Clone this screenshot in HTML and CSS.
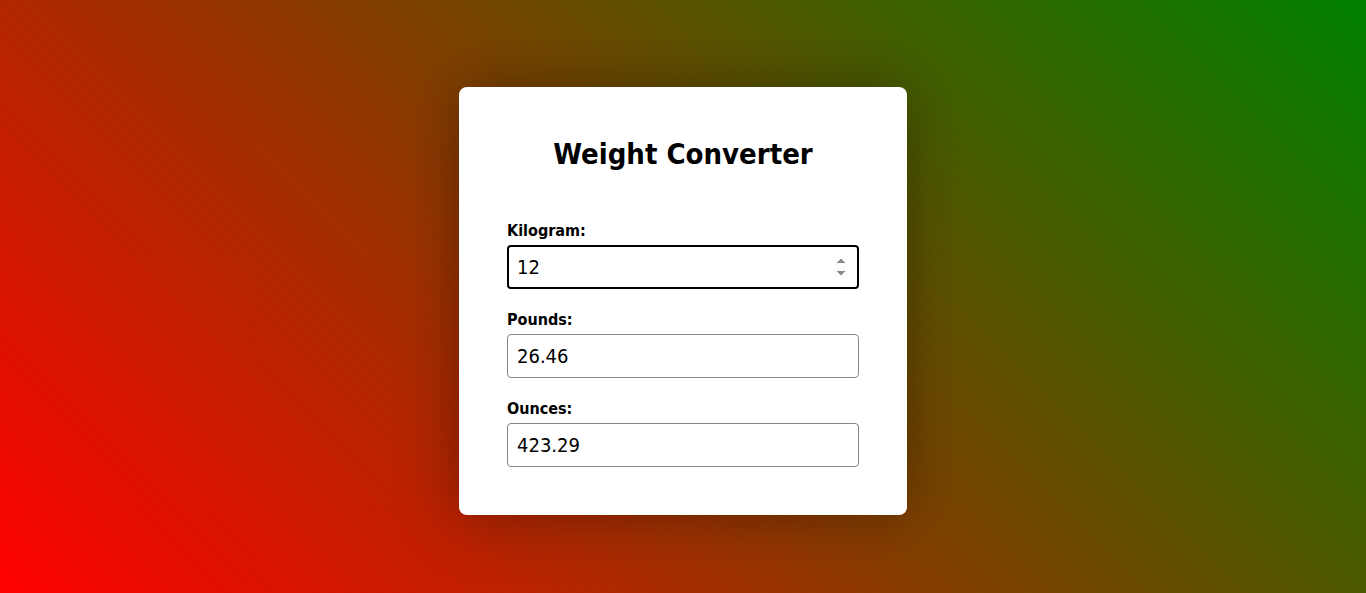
FILE: index.html
```html
<!DOCTYPE html>
<html lang="en">
<head>
<meta charset="utf-8">
<title>Weight Converter</title>
<link rel="stylesheet" href="styles.css">
</head>
<body>
<main class="page">
  <section class="card">
    <h1 class="title">Weight Converter</h1>
    <form class="form">
      <div class="field">
        <label class="label" for="kg">Kilogram:</label>
        <input class="input" id="kg" type="number" value="12" autofocus>
      </div>
      <div class="field">
        <label class="label" for="lb">Pounds:</label>
        <input class="input" id="lb" type="text" value="26.46">
      </div>
      <div class="field">
        <label class="label" for="oz">Ounces:</label>
        <input class="input" id="oz" type="text" value="423.29">
      </div>
    </form>
  </section>
</main>
</body>
</html>
```
FILE: styles.css
```css
html, body {
  margin: 0;
  padding: 0;
  height: 100%;
}
body {
  font-family: "DejaVu Sans Condensed", "DejaVu Sans", sans-serif;
  background: linear-gradient(45deg, #ff0000, #008000);
  color: #000;
}
.page {
  box-sizing: border-box;
  min-height: 100%;
  padding-top: 8px;
  display: flex;
  align-items: center;
  justify-content: center;
}
.card {
  width: 352px;
  padding: 48px;
  background: #fff;
  border-radius: 8px;
  box-shadow: 0 0 60px rgba(0, 0, 0, 0.35);
}
.title {
  margin: 0 0 48px;
  font-size: 29px;
  line-height: 38px;
  text-align: center;
  font-weight: bold;
}
.form {
  display: flex;
  flex-direction: column;
  gap: 21px;
}
.field {
  display: flex;
  flex-direction: column;
  gap: 4px;
}
.label {
  font-size: 16px;
  font-weight: bold;
  line-height: 20px;
}
.input {
  box-sizing: border-box;
  width: 352px;
  height: 44px;
  padding: 0 9px;
  font-family: inherit;
  font-size: 20px;
  border: 1px solid #858585;
  border-radius: 4px;
  color: #000;
  background: #fff;
}
.input:focus {
  outline: none;
  border: 2px solid #000;
  padding: 0 8px;
}
```
